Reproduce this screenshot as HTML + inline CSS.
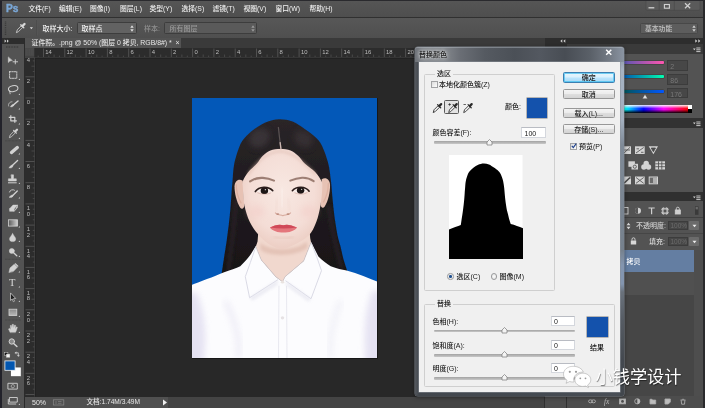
<!DOCTYPE html>
<html lang="zh-CN">
<head>
<meta charset="utf-8">
<title>替换颜色</title>
<style>
html,body{margin:0;padding:0;}
body{width:705px;height:408px;overflow:hidden;background:#282828;position:relative;
 font-family:"Liberation Sans","Noto Sans CJK SC",sans-serif;font-size:7px;color:#e4e4e4;line-height:1;font-weight:500;}
.a{position:absolute;}
.t{position:absolute;white-space:nowrap;}
#menubar{left:0;top:0;width:705px;height:17px;background:linear-gradient(#565656,#4e4e4e);}
#menubar .t{top:6.2px;font-size:6.8px;color:#f2f2f2;}
#optbar{left:0;top:18px;width:705px;height:19.5px;background:linear-gradient(#575757,#4f4f4f);}
#sep1{left:0;top:17px;width:705px;height:1px;background:#303030;}
.dd{position:absolute;background:#626262;border:0.5px solid #3d3d3d;border-radius:1.5px;box-sizing:border-box;}
#tabbar{left:25px;top:37.5px;width:519.5px;height:10.5px;background:#3a3a3a;}
#tab{left:25px;top:38px;width:156px;height:10px;background:#535353;}
#tools{left:2px;top:37.5px;width:21.5px;height:371px;background:#535353;}
#toolhead{left:2px;top:37.5px;width:21.5px;height:6px;background:#2d2d2d;}
#leftedge{left:0;top:37.5px;width:2px;height:371px;background:#2b2b2b;}
#gap{left:23.5px;top:37.5px;width:1.5px;height:371px;background:#2b2b2b;}
#status{left:25px;top:396.5px;width:143px;height:11.5px;background:#505050;}
#hscroll{left:168px;top:396.5px;width:376px;height:11.5px;background:#444444;}
</style>
</head>
<body>
<div id="root" style="position:absolute;left:0;top:0;width:705px;height:408px;overflow:hidden;will-change:transform;">
<!-- ===== menu bar ===== -->
<div class="a" id="menubar">
 <div class="t" style="left:6.2px;top:3px;font-size:11.3px;font-weight:bold;color:#7aa7d6;-webkit-text-stroke:0.4px #7aa7d6;transform:scaleX(0.9);transform-origin:0 0;">Ps</div>
 <div class="t" style="left:28.5px;">文件(F)</div>
 <div class="t" style="left:59px;">编辑(E)</div>
 <div class="t" style="left:90px;">图像(I)</div>
 <div class="t" style="left:120px;">图层(L)</div>
 <div class="t" style="left:149.5px;">类型(Y)</div>
 <div class="t" style="left:181.5px;">选择(S)</div>
 <div class="t" style="left:212.5px;">滤镜(T)</div>
 <div class="t" style="left:243.5px;">视图(V)</div>
 <div class="t" style="left:275.5px;">窗口(W)</div>
 <div class="t" style="left:309.5px;">帮助(H)</div>
</div>
<div class="a" id="sep1"></div>
<!-- ===== options bar ===== -->
<div class="a" id="optbar">
 <div class="t" style="left:42.5px;top:6.5px;color:#f2f2f2;">取样大小:</div>
 <div class="dd" style="left:76.5px;top:4px;width:60px;height:11.5px;"><div class="t" style="left:4px;top:2px;color:#f4f4f4;">取样点</div></div>
 <div class="t" style="left:144px;top:6.5px;color:#8f8f8f;">样本:</div>
 <div class="dd" style="left:164px;top:4px;width:93px;height:11.5px;background:#5a5a5a;"><div class="t" style="left:4.5px;top:2px;color:#9a9a9a;">所有图层</div></div>
 <div class="dd" style="left:640px;top:4.700px;width:58px;height:11.300px;background:#5d5d5d;border-color:#484848;"><div class="t" style="left:4px;top:2px;color:#c4c4c4;font-size:6.800px;">基本功能</div></div>
</div>
<!-- ===== document area ===== -->
<div class="a" id="tabbar"></div>
<div class="a" id="tab"><div class="t" style="left:6.5px;top:1.5px;color:#e6e6e6;font-size:6.9px;">证件照。.png @ 50% (图层 0 拷贝, RGB/8#) *&nbsp;&nbsp;×</div></div>
<!--RULERS-->
<svg class="a" style="left:25px;top:48px;" width="520" height="11" viewBox="25 48 520 11">
<rect x="25" y="48" width="520" height="9.500" fill="#2c2c2c"/>
<rect x="25" y="57" width="520" height="0.600" fill="#585858"/>
<rect x="34.800" y="57.600" width="510.200" height="1.400" fill="#222222"/>
<path d="M43.5,48.5V57M64.8,48.5V57M86.1,48.5V57M107.4,48.5V57M128.7,48.5V57M150.0,48.5V57M171.3,48.5V57M192.6,48.5V57M213.9,48.5V57M235.2,48.5V57M256.5,48.5V57M277.8,48.5V57M299.1,48.5V57M320.4,48.5V57M341.7,48.5V57M363.0,48.5V57M384.3,48.5V57M405.6,48.5V57M426.9,48.5V57M448.2,48.5V57M469.5,48.5V57M490.8,48.5V57M512.1,48.5V57M533.4,48.5V57" stroke="#606060" stroke-width="0.700" fill="none"/>
<path d="M54.1,54.5V57M75.4,54.5V57M96.8,54.5V57M118.0,54.5V57M139.3,54.5V57M160.7,54.5V57M181.9,54.5V57M203.2,54.5V57M224.6,54.5V57M245.8,54.5V57M267.1,54.5V57M288.4,54.5V57M309.8,54.5V57M331.0,54.5V57M352.3,54.5V57M373.6,54.5V57M394.9,54.5V57M416.2,54.5V57M437.5,54.5V57M458.9,54.5V57M480.1,54.5V57M501.4,54.5V57M522.8,54.5V57M544.0,54.5V57M38.2,55.600V57M48.8,55.600V57M59.5,55.600V57M70.1,55.600V57M80.8,55.600V57M91.4,55.600V57M102.1,55.600V57M112.7,55.600V57M123.4,55.600V57M134.0,55.600V57M144.7,55.600V57M155.3,55.600V57M166.0,55.600V57M176.6,55.600V57M187.3,55.600V57M197.9,55.600V57M208.6,55.600V57M219.2,55.600V57M229.9,55.600V57M240.5,55.600V57M251.2,55.600V57M261.8,55.600V57M272.5,55.600V57M283.1,55.600V57M293.8,55.600V57M304.4,55.600V57M315.1,55.600V57M325.7,55.600V57M336.4,55.600V57M347.0,55.600V57M357.7,55.600V57M368.3,55.600V57M379.0,55.600V57M389.6,55.600V57M400.3,55.600V57M410.9,55.600V57M421.6,55.600V57M432.2,55.600V57M442.9,55.600V57M453.5,55.600V57M464.2,55.600V57M474.8,55.600V57M485.5,55.600V57M496.1,55.600V57M506.8,55.600V57M517.4,55.600V57M528.1,55.600V57M538.7,55.600V57" stroke="#5c5c5c" stroke-width="0.600" fill="none"/>
<g font-family="Liberation Sans, sans-serif" font-size="5.900" fill="#bebebe"><text x="45.3" y="54.400">14</text><text x="66.6" y="54.400">12</text><text x="87.9" y="54.400">10</text><text x="109.2" y="54.400">8</text><text x="130.5" y="54.400">6</text><text x="151.8" y="54.400">4</text><text x="173.1" y="54.400">2</text><text x="194.4" y="54.400">0</text><text x="215.7" y="54.400">2</text><text x="237.0" y="54.400">4</text><text x="258.3" y="54.400">6</text><text x="279.6" y="54.400">8</text><text x="300.9" y="54.400">10</text><text x="322.2" y="54.400">12</text><text x="343.5" y="54.400">14</text><text x="364.8" y="54.400">16</text><text x="386.1" y="54.400">18</text><text x="407.4" y="54.400">20</text><text x="428.7" y="54.400">22</text><text x="450.0" y="54.400">24</text><text x="471.3" y="54.400">26</text><text x="492.6" y="54.400">28</text><text x="513.9" y="54.400">30</text><text x="535.2" y="54.400">32</text></g>
<rect x="25" y="48" width="9.300" height="8.800" fill="#494949"/>
<path d="M26,50H34M26,52H34M26,54H34" stroke="#5a5a5a" stroke-width="0.600" stroke-dasharray="0.800 0.800"/>
</svg>
<svg class="a" style="left:25px;top:57.500px;" width="11" height="339" viewBox="25 58 11 339">
<rect x="25" y="57.500" width="9.800" height="339" fill="#2c2c2c"/>
<rect x="34.200" y="57.500" width="0.600" height="339" fill="#585858"/>
<rect x="34.800" y="58.500" width="1.200" height="338" fill="#222222"/>
<path d="M25.500,76.8H34.500M25.500,98.0H34.500M25.500,119.2H34.500M25.500,140.4H34.500M25.500,161.5H34.500M25.500,182.7H34.500M25.500,203.9H34.500M25.500,225.1H34.500M25.500,246.3H34.500M25.500,267.4H34.500M25.500,288.6H34.500M25.500,309.8H34.500M25.500,331.0H34.500M25.500,352.2H34.500M25.500,373.3H34.500M25.500,394.5H34.500" stroke="#606060" stroke-width="0.700" fill="none"/>
<path d="M31.500,66.2H34.500M31.500,87.4H34.500M31.500,108.6H34.500M31.500,129.8H34.500M31.500,151.0H34.500M31.500,172.1H34.500M31.500,193.3H34.500M31.500,214.5H34.500M31.500,235.7H34.500M31.500,256.8H34.500M31.500,278.0H34.500M31.500,299.2H34.500M31.500,320.4H34.500M31.500,341.6H34.500M31.500,362.7H34.500M31.500,383.9H34.500M32.800,60.9H34.500M32.800,71.5H34.500M32.800,82.1H34.500M32.800,92.7H34.500M32.800,103.3H34.500M32.800,113.9H34.500M32.800,124.5H34.500M32.800,135.1H34.500M32.800,145.7H34.500M32.800,156.2H34.500M32.800,166.8H34.500M32.800,177.4H34.500M32.800,188.0H34.500M32.800,198.6H34.500M32.800,209.2H34.500M32.800,219.8H34.500M32.800,230.4H34.500M32.800,241.0H34.500M32.800,251.6H34.500M32.800,262.1H34.500M32.800,272.7H34.500M32.800,283.3H34.500M32.800,293.9H34.500M32.800,304.5H34.500M32.800,315.1H34.500M32.800,325.7H34.500M32.800,336.3H34.500M32.800,346.9H34.500M32.800,357.5H34.500M32.800,368.0H34.500M32.800,378.6H34.500M32.800,389.2H34.500" stroke="#5c5c5c" stroke-width="0.600" fill="none"/>
<g font-family="Liberation Sans, sans-serif" font-size="5.900" fill="#bebebe"><text x="28.300" y="61.8" text-anchor="middle">4</text><text x="28.300" y="83.0" text-anchor="middle">2</text><text x="28.300" y="104.2" text-anchor="middle">0</text><text x="28.300" y="125.4" text-anchor="middle">2</text><text x="28.300" y="146.6" text-anchor="middle">4</text><text x="28.300" y="167.7" text-anchor="middle">6</text><text x="28.300" y="188.9" text-anchor="middle">8</text><text x="28.300" y="210.1" text-anchor="middle">1</text><text x="28.300" y="215.6" text-anchor="middle">0</text><text x="28.300" y="231.3" text-anchor="middle">1</text><text x="28.300" y="236.8" text-anchor="middle">2</text><text x="28.300" y="252.5" text-anchor="middle">1</text><text x="28.300" y="258.0" text-anchor="middle">4</text><text x="28.300" y="273.6" text-anchor="middle">1</text><text x="28.300" y="279.1" text-anchor="middle">6</text><text x="28.300" y="294.8" text-anchor="middle">1</text><text x="28.300" y="300.3" text-anchor="middle">8</text><text x="28.300" y="316.0" text-anchor="middle">2</text><text x="28.300" y="321.5" text-anchor="middle">0</text><text x="28.300" y="337.2" text-anchor="middle">2</text><text x="28.300" y="342.7" text-anchor="middle">2</text><text x="28.300" y="358.4" text-anchor="middle">2</text><text x="28.300" y="363.9" text-anchor="middle">4</text><text x="28.300" y="379.5" text-anchor="middle">2</text><text x="28.300" y="385.0" text-anchor="middle">6</text></g>
</svg>
<!--/RULERS-->
<div class="a" id="leftedge"></div>
<div class="a" id="tools"></div>
<div class="a" id="toolhead"></div>
<div class="a" id="gap"></div>
<div class="a" id="status">
 <div class="t" style="left:7px;top:2.5px;color:#e8e8e8;">50%</div>
 <div class="t" style="left:61.5px;top:2.7px;color:#e8e8e8;font-size:6.6px;">文档:1.74M/3.49M</div>
</div>
<div class="a" id="hscroll"></div>
<!--MISC-->
<!-- window controls -->
<svg class="a" style="left:640px;top:0;" width="65" height="14" viewBox="640 0 65 14">
 <path d="M646,0 V9 a1.300,1.300 0 0 0 1.300,1.300 H698.700 a1.300,1.300 0 0 0 1.300,-1.300 V0 Z" fill="#5a5a5a" stroke="#464646" stroke-width="0.600"/>
 <path d="M659.200,0.800 V10.300 M674.300,0.800 V10.300" fill="none" stroke="#484848" stroke-width="0.700"/>
 <path d="M648.500,7.800 H654.300" stroke="#d2d2d2" stroke-width="1.300"/>
 <rect x="664.400" y="4.500" width="5" height="3.700" fill="none" stroke="#d2d2d2" stroke-width="1.100"/>
 <path d="M685,3.300 L690.200,8.200 M690.200,3.300 L685,8.200" stroke="#d2d2d2" stroke-width="1.200"/>
</svg>
<!-- options bar icon etc -->
<svg class="a" style="left:0;top:18px;" width="140" height="19.500" viewBox="0 18 140 19.500">
 <path d="M5.500,21.500 V35" stroke="#3a3a3a" stroke-width="1.400" stroke-dasharray="0.900 0.900"/>
 <g fill="none" stroke="#d8d8d8" stroke-linecap="round" stroke-linejoin="round">
  <path d="M16.500,32.300 L17.300,29.800 L21.300,25.800 L22.800,27.300 L18.800,31.300 Z" stroke-width="0.800"/>
  <path d="M20.800,24.800 L23.800,27.800" stroke-width="1.300"/>
  <path d="M22.500,26 L24.500,24" stroke-width="2.400"/>
 </g>
 <path d="M29.800,27.200 H33 L31.400,29.200 Z" fill="#d8d8d8"/>
 <path d="M36.800,20 V35.500" stroke="#444" stroke-width="0.700"/>
 <path d="M37.400,20 V35.500" stroke="#5e5e5e" stroke-width="0.500"/>
</svg>
<svg class="a" style="left:130px;top:24.500px;" width="4" height="7" viewBox="0 0 4 7"><path d="M2,0.300 L3.700,2.700 H0.300 Z M2,6.700 L3.700,4.300 H0.300 Z" fill="#e0e0e0"/></svg>
<svg class="a" style="left:250.500px;top:24.500px;" width="4" height="7" viewBox="0 0 4 7"><path d="M2,0.300 L3.700,2.700 H0.300 Z M2,6.700 L3.700,4.300 H0.300 Z" fill="#9a9a9a"/></svg>
<svg class="a" style="left:692px;top:24.500px;" width="4" height="7" viewBox="0 0 4 7"><path d="M2,0.300 L3.700,2.700 H0.300 Z M2,6.700 L3.700,4.300 H0.300 Z" fill="#d0d0d0"/></svg>
<!-- status bar icons -->
<svg class="a" style="left:52px;top:398px;" width="14" height="9" viewBox="52 398 14 9"><rect x="53.300" y="399.800" width="10.500" height="5.200" fill="none" stroke="#8a8a8a" stroke-width="0.700"/><path d="M56,401 v3 M58,401.500 h3.500 M58,403.300 h3.500" stroke="#8a8a8a" stroke-width="0.600"/></svg>
<svg class="a" style="left:162px;top:399px;" width="6" height="7" viewBox="0 0 6 7"><path d="M1,0.600 L5,3.500 L1,6.400 Z" fill="#f0f0f0"/></svg>
<!--/MISC-->
<!--TOOLS-->
<svg class="a" style="left:0;top:37.5px;" width="25" height="370.5" viewBox="0 37.5 25 370.5">
 <!-- header arrows + grip -->
 <path d="M4.600,39 L6.400,40.600 L4.600,42.200 Z M7,39 L8.800,40.600 L7,42.200 Z" fill="#d0d0d0"/>
 <path d="M6,46.500 H19" stroke="#3a3a3a" stroke-width="1.600" stroke-dasharray="0.800 0.800"/>
 <g fill="none" stroke="#d2d2d2" stroke-width="1" stroke-linecap="round" stroke-linejoin="round">
  <!-- move -->
  <path d="M8.300,56.800 L8.300,62 L9.800,60.600 L12,60 Z" fill="#d2d2d2" stroke-width="0.500"/>
  <path d="M13,61.300 H17.600 M15.300,59.200 V63.400" stroke-width="0.900"/>
  <!-- marquee -->
  <rect x="9.600" y="71.200" width="7.200" height="6.600" stroke-dasharray="1.400 1" stroke-width="0.900"/>
  <!-- lasso -->
  <ellipse cx="13.200" cy="88.200" rx="4.800" ry="2.900" transform="rotate(-12 13.200 88.200)" stroke-width="1"/>
  <path d="M9.500,90.200 C9,91.500 10.500,92 10.200,93.300" stroke-width="0.900"/>
  <!-- quick select -->
  <path d="M18,100.500 L13,104.800" stroke-width="1.500"/>
  <path d="M13.200,104 C11.500,104.200 10.800,105.500 10.300,106.300 C11.800,106.800 13.500,106 13.900,104.800 Z" fill="#d2d2d2" stroke-width="0.400"/>
  <path d="M8.600,105.500 A3.400,3.400 0 0 1 12,101.300" stroke-dasharray="1 0.800" stroke-width="0.700"/>
  <!-- crop -->
  <path d="M10.800,114.800 V120.300 H16.800 M8.800,116.800 H14.800 V122.300" stroke-width="1.200" stroke-linecap="butt"/>
  <!-- eyedropper -->
  <path d="M9.500,136.800 L10.200,134.500 L14,130.700 L15.500,132.200 L11.700,136 Z" stroke-width="0.800"/>
  <path d="M13.600,129.800 L16.400,132.600" stroke-width="1.200"/>
  <path d="M15.200,131 L17,129.200" stroke-width="2.200"/>
  <!-- healing -->
  <path d="M11.500,152 L17.300,147" stroke-width="3.400"/>
  <!-- brush -->
  <path d="M17.600,160 L12.300,165" stroke-width="1.300"/>
  <path d="M12.300,164.500 C10.500,164.500 10,166.500 8.800,167.300 C10.800,168 12.800,167.300 13,165.300 Z" fill="#d2d2d2" stroke-width="0.400"/>
  <!-- stamp -->
  <path d="M11.300,174.300 H13.500 V178.300 H16.300 V180.500 H8.400 V178.300 H11.300 Z" fill="#d2d2d2" stroke-width="0.500"/>
  <path d="M8.400,182.300 H16.300" stroke-width="1"/>
  <!-- history brush -->
  <path d="M17.300,190.500 L12.500,195.200" stroke-width="1.300"/>
  <path d="M12.400,194.500 C10.800,194.500 10.300,196 9,196.700 C11,197.300 12.900,196.800 13.200,195.200 Z" fill="#d2d2d2" stroke-width="0.400"/>
  <path d="M9.500,191.500 A3.200,3.200 0 0 1 14.500,189.700" stroke-width="0.900"/>
  <!-- eraser -->
  <path d="M9.600,208.300 L13,204.600 H17.500 L14.200,208.300 Z M9.600,208.300 V210.800 H14.200 V208.300 M14.200,210.800 L17.500,207 V204.600" fill="#d2d2d2" stroke-width="0.500"/>
  <!-- blur drop -->
  <path d="M12.600,233 C14,235.500 15.700,237 15.700,238.500 A3.100,2.600 0 0 1 9.500,238.500 C9.500,237 11.200,235.500 12.600,233 Z" fill="#d2d2d2" stroke-width="0.400"/>
  <!-- dodge -->
  <circle cx="11.800" cy="250.400" r="2.500" fill="#d2d2d2" stroke-width="0.500"/>
  <path d="M13.600,252.300 L16.800,255.300" stroke-width="1.300"/>
  <!-- pen -->
  <path d="M9,271.800 L10,267.500 L14.200,263.800 L17.300,266.800 L13.500,270.800 Z" fill="#d2d2d2" stroke-width="0.500"/>
  <path d="M15.300,263.300 L17.800,265.700" stroke-width="1.200"/>
  <!-- path selection -->
  <path d="M10.500,292.800 L10.500,300 L12.200,298.500 L13.300,301.200 L14.500,300.700 L13.400,298.200 L15.300,298 Z" fill="#1e1e1e" stroke-width="0.700"/>
  <!-- hand -->
  <path d="M10,331.800 L8.500,328.500 L9.300,327.800 L10.600,329 L10.300,325 L11.300,324.700 L12,327.500 L12.300,323.800 L13.400,323.800 L13.700,327.500 L14.600,324.500 L15.600,324.800 L15.300,328.200 L16.600,326.300 L17.400,326.800 L16.300,330.300 L15.500,331.800 Z" fill="#d2d2d2" stroke-width="0.400"/>
  <!-- zoom -->
  <circle cx="11.800" cy="341" r="2.700" stroke-width="1" fill="#8a8a8a"/>
  <path d="M13.900,343.200 L16.900,346" stroke-width="1.500"/>
  <!-- swap arrows -->
  <path d="M15.500,352.300 H18.300 V355.300" stroke-width="0.800"/>
  <path d="M15,352.300 l1.300,-1 v2 Z M18.300,356 l-1,-1.300 h2 Z" fill="#d2d2d2" stroke-width="0.300"/>
  <!-- quick mask -->
  <rect x="8.300" y="382.800" width="9" height="5.800" stroke-width="0.900"/>
  <circle cx="12.800" cy="385.700" r="1.600" stroke-dasharray="0.700 0.500" stroke-width="0.600"/>
  <!-- screen mode -->
  <rect x="9.800" y="397" width="7.500" height="4.600" stroke-width="0.900"/>
  <path d="M8.300,399 V403.500 H15.800" stroke-width="0.900"/>
 </g>
 <!-- T -->
 <text x="8.900" y="285.800" font-family="Liberation Serif, serif" font-size="10.500" fill="#d8d8d8">T</text>
 <!-- gradient tool -->
 <defs><linearGradient id="gt" x1="0" x2="1"><stop offset="0" stop-color="#5a5a5a"/><stop offset="1" stop-color="#cfcfcf"/></linearGradient>
 <linearGradient id="rt" x1="0" x2="0" y1="0" y2="1"><stop offset="0" stop-color="#8a8a8a"/><stop offset="1" stop-color="#b8b8b8"/></linearGradient></defs>
 <rect x="8.500" y="219.300" width="9" height="6.300" fill="url(#gt)" stroke="#d2d2d2" stroke-width="0.800"/>
 <rect x="9" y="308.700" width="7.800" height="6.300" fill="url(#rt)" stroke="#d2d2d2" stroke-width="0.800"/>
 <!-- default colours mini -->
 <rect x="4.300" y="351.800" width="3.600" height="3.300" fill="#1a1a1a" stroke="#d2d2d2" stroke-width="0.500"/>
 <rect x="6.300" y="353.600" width="3.600" height="3.300" fill="#f4f4f4" stroke="#bbb" stroke-width="0.300"/>
 <!-- fg / bg swatches -->
 <rect x="10.700" y="366.600" width="10.400" height="9.400" fill="#ffffff" stroke="#3a3a3a" stroke-width="0.500"/>
 <rect x="4.900" y="360.400" width="10.200" height="9.400" fill="#0256b0" stroke="#f4f4f4" stroke-width="0.800"/>
 <!-- corner marks -->
 <g fill="#c8c8c8">
  <path d="M20,78 v1.600 h-1.600 Z M20,93 v1.600 h-1.600 Z M20,107.500 v1.600 h-1.600 Z M20,122.500 v1.600 h-1.600 Z M20,137 v1.600 h-1.600 Z M20,152.500 v1.600 h-1.600 Z M20,167 v1.600 h-1.600 Z M20,182 v1.600 h-1.600 Z M20,196.500 v1.600 h-1.600 Z M20,211 v1.600 h-1.600 Z M20,225.500 v1.600 h-1.600 Z M20,240 v1.600 h-1.600 Z M20,255 v1.600 h-1.600 Z M20,270.500 v1.600 h-1.600 Z M20,285.500 v1.600 h-1.600 Z M20,300 v1.600 h-1.600 Z M20,315 v1.600 h-1.600 Z M20,331 v1.600 h-1.600 Z M20,403 v1.600 h-1.600 Z"/>
 </g>
 <!-- separators -->
 <path d="M5,140.300 H21 M5,258.800 H21 M5,319.500 H21" stroke="#3c3c3c" stroke-width="0.700" stroke-dasharray="0.700 0.700"/>
</svg>
<!--/TOOLS-->
<!--PHOTO-->
<svg class="a" style="left:192px;top:97.700px;box-shadow:0.500px 0.500px 0 0.400px #161616;" width="185" height="260" viewBox="192 98 184 259" preserveAspectRatio="none">
 <defs>
  <filter id="b1" x="-5%" y="-5%" width="110%" height="110%"><feGaussianBlur stdDeviation="0.6"/></filter>
  <filter id="b2" x="-20%" y="-20%" width="140%" height="140%"><feGaussianBlur stdDeviation="1.6"/></filter>
  <filter id="b3" x="-30%" y="-30%" width="160%" height="160%"><feGaussianBlur stdDeviation="3"/></filter>
  <filter id="b4" x="-30%" y="-30%" width="160%" height="160%"><feGaussianBlur stdDeviation="5"/></filter>
  <radialGradient id="skin" cx="0.5" cy="0.42" r="0.62">
   <stop offset="0" stop-color="#f8e8e2"/><stop offset="0.65" stop-color="#f4ddd6"/><stop offset="1" stop-color="#eacabf"/>
  </radialGradient>
  <linearGradient id="hairg" x1="0" y1="0" x2="0" y2="1">
   <stop offset="0" stop-color="#2a2528"/><stop offset="0.45" stop-color="#1f1b1e"/><stop offset="1" stop-color="#171416"/>
  </linearGradient>
  <clipPath id="pc"><rect x="192" y="98" width="184" height="259"/></clipPath>
  <clipPath id="hc"><path d="M221.5,273.0 C221.9,270.5 222.9,263.5 223.7,258.0 C224.5,252.5 225.7,246.0 226.5,240.0 C227.3,234.0 228.2,227.5 228.8,222.0 C229.4,216.5 229.9,211.8 230.3,207.0 C230.7,202.2 231.0,197.4 231.3,193.0 C231.6,188.6 231.9,185.6 232.3,180.7 C232.8,175.8 232.8,169.2 234.0,163.5 C235.2,157.8 237.5,150.6 239.2,146.3 C240.9,142.0 241.9,140.7 244.3,137.8 C246.7,135.0 250.4,131.8 253.8,129.2 C257.2,126.6 260.9,124.0 265.0,122.3 C269.1,120.6 274.2,119.3 278.7,119.2 C283.2,119.1 287.7,119.8 292.0,121.5 C296.3,123.2 300.5,126.5 304.4,129.2 C308.3,131.9 312.7,135.0 315.6,137.8 C318.5,140.7 319.6,142.0 321.6,146.3 C323.6,150.6 326.2,157.8 327.6,163.5 C329.0,169.2 329.5,175.3 330.2,180.7 C330.9,186.1 331.1,191.1 331.6,196.0 C332.1,200.9 332.5,205.8 333.0,210.0 C333.5,214.2 333.8,217.2 334.5,221.5 C335.2,225.8 336.1,231.9 337.0,236.0 C337.9,240.1 338.8,242.3 339.7,246.0 C340.6,249.7 341.4,253.9 342.5,258.0 C343.6,262.1 345.8,268.4 346.5,270.5 L330,290 L240,290 Z"/></clipPath>
 </defs>
 <rect x="192" y="98" width="184" height="259" fill="#0358b8"/>
 <g clip-path="url(#pc)">
 <g filter="url(#b1)">
  <!-- hair -->
  <path fill="url(#hairg)" d="M221.5,273.0 C221.9,270.5 222.9,263.5 223.7,258.0 C224.5,252.5 225.7,246.0 226.5,240.0 C227.3,234.0 228.2,227.5 228.8,222.0 C229.4,216.5 229.9,211.8 230.3,207.0 C230.7,202.2 231.0,197.4 231.3,193.0 C231.6,188.6 231.9,185.6 232.3,180.7 C232.8,175.8 232.8,169.2 234.0,163.5 C235.2,157.8 237.5,150.6 239.2,146.3 C240.9,142.0 241.9,140.7 244.3,137.8 C246.7,135.0 250.4,131.8 253.8,129.2 C257.2,126.6 260.9,124.0 265.0,122.3 C269.1,120.6 274.2,119.3 278.7,119.2 C283.2,119.1 287.7,119.8 292.0,121.5 C296.3,123.2 300.5,126.5 304.4,129.2 C308.3,131.9 312.7,135.0 315.6,137.8 C318.5,140.7 319.6,142.0 321.6,146.3 C323.6,150.6 326.2,157.8 327.6,163.5 C329.0,169.2 329.5,175.3 330.2,180.7 C330.9,186.1 331.1,191.1 331.6,196.0 C332.1,200.9 332.5,205.8 333.0,210.0 C333.5,214.2 333.8,217.2 334.5,221.5 C335.2,225.8 336.1,231.9 337.0,236.0 C337.9,240.1 338.8,242.3 339.7,246.0 C340.6,249.7 341.4,253.9 342.5,258.0 C343.6,262.1 345.8,268.4 346.5,270.5 L330,290 L240,290 Z"/>
  <g clip-path="url(#hc)">
   <ellipse cx="259" cy="138" rx="11" ry="9" fill="#4a4346" opacity="0.55" filter="url(#b3)" transform="rotate(-35 259 138)"/>
   <ellipse cx="303" cy="139" rx="10" ry="8" fill="#453e41" opacity="0.5" filter="url(#b3)" transform="rotate(35 303 139)"/>
   <path d="M236,200 C234,225 231,250 228,270" stroke="#2e282a" stroke-width="4" fill="none" opacity="0.6" filter="url(#b2)"/>
   <path d="M328,205 C331,230 336,250 341,268" stroke="#2e282a" stroke-width="4" fill="none" opacity="0.6" filter="url(#b2)"/>
  </g>
  <!-- neck -->
  <path fill="#f1d8ce" d="M258.500,225 L257.200,241 L255.500,246 L261,259.500 L275.300,276 L282,281 L284.500,276 L303,260.400 L310.400,241.700 L309.600,238 L308.500,225 Z"/>
  <path fill="#dbb5a7" opacity="0.6" filter="url(#b2)" d="M260,242 C268,251 296,251 306,241 L307,247 C297,256 268,257 260,249 Z"/>
  <!-- ears -->
  <path d="M242.500,180.500 C238.500,178 234.500,180.500 234.300,186 C234.200,193 236.500,202 239.800,207 C241.700,209.500 243.800,208 244,205 Z" fill="#e7c2b4"/>
  <path d="M321,179 C325,176.500 329,179 329.300,184.500 C329.500,192 327.300,201 324,206 C322.200,208.500 320,207 319.800,204 Z" fill="#e7c2b4"/>
  <path d="M236,184 C236,191 238,198 241,203" stroke="#d9a999" stroke-width="1.200" fill="none" opacity="0.7"/>
  <path d="M327.600,183 C327.600,190 325.600,197 322.600,202" stroke="#d9a999" stroke-width="1.200" fill="none" opacity="0.7"/>
  <!-- face -->
  <path fill="url(#skin)" d="M280.0,148.8 C276.7,148.8 272.9,149.2 270.0,150.3 C267.1,151.4 264.8,153.3 262.5,155.5 C260.2,157.7 258.8,160.8 256.3,163.5 C253.9,166.2 250.1,169.1 247.8,172.0 C245.5,174.9 243.5,178.2 242.6,180.7 C241.7,183.2 242.4,183.1 242.6,187.0 C242.8,190.9 242.8,198.6 244.0,204.3 C245.2,210.1 247.0,216.3 249.5,221.5 C252.0,226.7 255.6,231.4 259.0,235.2 C262.4,239.0 266.2,242.3 270.0,244.5 C273.8,246.7 277.7,248.5 281.5,248.5 C285.3,248.5 288.6,246.7 293.0,244.5 C297.4,242.3 304.0,239.0 307.8,235.2 C311.6,231.4 313.6,226.7 315.6,221.5 C317.6,216.3 318.9,210.1 319.9,204.3 C320.9,198.6 321.5,190.9 321.6,187.0 C321.7,183.1 321.9,183.2 320.7,180.7 C319.5,178.2 317.4,174.9 314.7,172.0 C312.0,169.1 307.3,166.2 304.4,163.5 C301.5,160.8 299.9,157.7 297.5,155.5 C295.1,153.3 292.9,151.4 290.0,150.3 C287.1,149.2 283.3,148.8 280.0,148.8 Z"/>
  <!-- hair parting -->
  <path d="M277.900,127 C278.500,133 279.300,140 280.400,148.500" stroke="#7d7371" stroke-width="1.200" fill="none" opacity="0.6"/>
  <path d="M279.600,142 L280.600,150" stroke="#e6d0c9" stroke-width="1.300" fill="none" opacity="0.8"/>
  <!-- forehead shadow under hairline -->
  <path d="M247.800,174 C252,168 256,163 262,158 C268,153.500 274,151.500 279.500,151 C286,151.500 292,154 298,158.500 C304,163 310,169 315,174" stroke="#d9b5a8" stroke-width="2" fill="none" opacity="0.55" filter="url(#b2)"/>
  <!-- cheeks blush -->
  <ellipse cx="256" cy="211" rx="8" ry="6" fill="#f3cdc8" opacity="0.55" filter="url(#b3)"/>
  <ellipse cx="308" cy="211" rx="8" ry="6" fill="#f3cdc8" opacity="0.55" filter="url(#b3)"/>
  <!-- eyebrows -->
  <path d="M249.800,181 C254,178.300 259,177.300 262.500,177.600 C266.500,177.900 270.500,179 273.500,180.300" stroke="#8d6d61" stroke-width="2.100" fill="none" stroke-linecap="round" opacity="0.85"/>
  <path d="M289.800,180.300 C293,179 297.500,177.800 301.500,177.500 C305.500,177.300 309.500,178.400 313,180.800" stroke="#8d6d61" stroke-width="2.100" fill="none" stroke-linecap="round" opacity="0.85"/>
  <!-- eyes -->
  <path d="M256,191 C259,187 268,186.600 271.500,191.300 C267,193.800 260,193.800 256,191 Z" fill="#f6ebe8"/>
  <path d="M292.600,191 C296,186.400 304.500,186.700 307.600,190.500 C303.500,193.500 297,193.600 292.600,191 Z" fill="#f6ebe8"/>
  <ellipse cx="264" cy="190.300" rx="3.700" ry="3.400" fill="#1d1514"/>
  <ellipse cx="300" cy="190" rx="3.700" ry="3.400" fill="#1d1514"/>
  <path d="M255,191.200 C258.500,186 268,185.600 272.300,190.300" stroke="#2b1d1a" stroke-width="1.600" fill="none" stroke-linecap="round"/>
  <path d="M291.800,190.300 C296,185.500 304.800,185.800 308.500,190.800" stroke="#2b1d1a" stroke-width="1.600" fill="none" stroke-linecap="round"/>
  <path d="M257,192.300 C261,194.300 267,194.300 270.500,192.500" stroke="#c79c90" stroke-width="0.700" fill="none" opacity="0.7"/>
  <path d="M294,192.300 C298,194.300 303.500,194.300 306.800,192" stroke="#c79c90" stroke-width="0.700" fill="none" opacity="0.7"/>
  <circle cx="265" cy="189.300" r="0.700" fill="#fff" opacity="0.8"/><circle cx="301" cy="189" r="0.700" fill="#fff" opacity="0.8"/>
  <!-- nose -->
  <path d="M281.500,188 L281.800,207" stroke="#fdf6f3" stroke-width="2.500" fill="none" opacity="0.45" filter="url(#b2)"/>
  <path d="M277,198 C276.500,204 275.500,208 275,211.500" stroke="#e6c6bb" stroke-width="1.400" fill="none" opacity="0.35" filter="url(#b2)"/><path d="M287.500,198 C288,204 289,208 289.500,211.500" stroke="#e6c6bb" stroke-width="1.400" fill="none" opacity="0.3" filter="url(#b2)"/>
  <path d="M275,212.500 C276.500,214.800 280,214.300 282.300,215.200 C284.500,214.300 288.500,214.800 290,212.500" stroke="#cf9e8f" stroke-width="1.100" fill="none" stroke-linecap="round" opacity="0.8"/><ellipse cx="277.300" cy="213.600" rx="1.500" ry="0.800" fill="#a8705f" opacity="0.75"/><ellipse cx="287.500" cy="213.600" rx="1.500" ry="0.800" fill="#a8705f" opacity="0.75"/>
  <!-- lips -->
  <path d="M269.500,227 C274,224.800 279,223.300 282.800,224.800 C286.500,223.300 291,224.800 296.500,227 C292,233.800 274,233.800 269.500,227 Z" fill="#e4767c"/>
  <path d="M269.500,227 C274,224.800 279,223.300 282.800,224.800 C286.500,223.300 291,224.800 296.500,227 C288,228.300 278,228.300 269.500,227 Z" fill="#d04a58"/>
  <path d="M273,236 C278,238.500 288,238.500 293,236" stroke="#e0bdb0" stroke-width="1.500" fill="none" opacity="0.6" filter="url(#b2)"/>
  <!-- shirt -->
  <path fill="#fcfcfe" d="M190,285 C200,281 214,276 223.300,271.900 C230,269.500 236,267.500 240,265.600 C245,261 248,257 250.300,254 L255.500,245.500 L261,259.500 L275.300,276 L282,281 L284.500,276 L303,260.400 L310.400,241.500 L317.700,256 C322,260 326,263.500 330,265.600 C336,268 341,269 345.800,269.800 C357,273 368,277.500 378,281.500 L378,360 L190,360 Z"/>
  <!-- collar shadows -->
  <path d="M255.500,246 L250,262 L245,276 L249.300,297 L277.500,279" stroke="#d6d6e2" stroke-width="0.900" fill="none" stroke-linejoin="round"/>
  <path d="M310.400,242 L316,256 L320.800,270 L310.400,298 L285,280" stroke="#d6d6e2" stroke-width="0.900" fill="none" stroke-linejoin="round"/>
  <path d="M249.300,297 L277.500,279 L277,284 L252,300 Z" fill="#e4e4ee" opacity="0.7" filter="url(#b2)"/>
  <path d="M310.400,298 L285,280 L286,285 L308,301 Z" fill="#e4e4ee" opacity="0.7" filter="url(#b2)"/>
  <path d="M255.800,247 L261,259.500 L275.300,276 L282,281 L284.500,276 L303,260.400 L310,243" stroke="#d8cccd" stroke-width="0.800" fill="none"/>
  <path d="M278.500,285 L278,357 M286,285 L286.500,357" stroke="#e3e3ec" stroke-width="0.800" fill="none"/>
  <ellipse cx="282" cy="281.500" rx="1.700" ry="1.400" fill="#e9e3e0"/>
  <ellipse cx="282" cy="317" rx="1.700" ry="1.700" fill="#e6e2e4"/>
  <!-- soft shirt shading -->
  <path d="M197,292 C207,318 206,340 203,370 L180,370 L180,292 Z" fill="#e3e0f1" opacity="0.9" filter="url(#b3)"/>
  <path d="M371,290 C362,316 363,340 365,370 L390,370 L390,290 Z" fill="#e3e0f1" opacity="0.9" filter="url(#b3)"/>
  <path d="M225,300 C235,320 240,340 238,357" stroke="#eae8f4" stroke-width="5" fill="none" opacity="0.8" filter="url(#b3)"/>
  <path d="M340,300 C332,320 328,340 330,357" stroke="#ededf5" stroke-width="5" fill="none" opacity="0.8" filter="url(#b3)"/>
 </g>
 </g>
</svg>
<!--/PHOTO-->
<!--DOCK-->
<div class="a" style="left:544.5px;top:37.5px;width:22.5px;height:370.5px;background:#4d4d4d;"></div>
<div class="a" style="left:544.5px;top:37.5px;width:22.5px;height:10.5px;background:#2d2d2d;"></div>
<svg class="a" style="left:559.500px;top:39px;" width="6" height="4" viewBox="0 0 6 4"><path d="M2.300,0.300 L0.300,2 L2.300,3.700 Z M5.300,0.300 L3.300,2 L5.300,3.700 Z" fill="#d0d0d0"/></svg>
<!--/DOCK-->
<!--PANELS-->
<style>
#pnl{left:567px;top:37.5px;width:138px;height:370.5px;background:#535353;}
#pnl .t{font-size:7px;}
.ph{position:absolute;left:0;width:138px;background:#343434;}
.vb{position:absolute;box-sizing:border-box;background:#474747;border:0.5px solid #3c3c3c;color:#777;font-size:7px;white-space:nowrap;}
.mi{position:absolute;}
</style>
<div class="a" id="pnl">
 <!-- coords = page minus (567,37.5) -->
 <div class="ph" style="top:0;height:6.5px;background:#2d2d2d;"></div>
 <svg class="a" style="left:128px;top:1.500px;" width="6" height="4" viewBox="0 0 6 4"><path d="M0.300,0.300 L2.300,2 L0.300,3.700 Z M3.300,0.300 L5.300,2 L3.300,3.700 Z" fill="#d0d0d0"/></svg>
 <div class="ph" style="top:6.500px;height:9.500px;background:#3a3a3a;"></div>
 <svg class="mi" style="left:126px;top:9px;" width="8" height="6" viewBox="0 0 8 6"><path d="M0,1.500 L2.600,1.500 L1.300,3.300 Z" fill="#d6d6d6"/><path d="M3.300,1 H7.500 M3.300,2.800 H7.500 M3.300,4.600 H7.500" stroke="#d6d6d6" stroke-width="0.900"/></svg>
 <!-- colour sliders -->
 <div class="a" style="left:34.700px;top:23.500px;width:62px;height:3.200px;border-radius:1px;background:linear-gradient(to right,#0256b0,#ff56b0);box-shadow:0 0 0 0.5px #3a3a3a;"></div>
 <div class="a" style="left:34.700px;top:37.800px;width:62px;height:3.200px;border-radius:1px;background:linear-gradient(to right,#0200b0,#02ffb0);box-shadow:0 0 0 0.5px #3a3a3a;"></div>
 <div class="a" style="left:34.700px;top:52px;width:62px;height:3.200px;border-radius:1px;background:linear-gradient(to right,#025600,#0256ff);box-shadow:0 0 0 0.5px #3a3a3a;"></div>
 <svg class="a" style="left:74.500px;top:56px;" width="6" height="5" viewBox="0 0 6 5"><path d="M3,0.300 L5.700,4.700 L0.300,4.700 Z" fill="#e4e4e4" stroke="#3a3a3a" stroke-width="0.400"/></svg>
 <div class="vb" style="left:99.800px;top:22.800px;width:21px;height:10.400px;"><span style="position:absolute;left:2.500px;top:1.700px;">2</span></div>
 <div class="vb" style="left:99.800px;top:36.700px;width:21px;height:10.400px;"><span style="position:absolute;left:2.500px;top:1.700px;">86</span></div>
 <div class="vb" style="left:99.800px;top:50.800px;width:21px;height:10.200px;"><span style="position:absolute;left:2.500px;top:1.700px;">176</span></div>
 <!-- spectrum -->
 <div class="a" style="left:20px;top:67.500px;width:100.500px;height:8.300px;background:linear-gradient(to right,#ff0000 0,#ffff00 12%,#00ff00 26%,#00ffff 38%,#0000ff 56%,#ff00ff 76%,#ff0000 100%);"></div>
 <div class="a" style="left:20px;top:67.500px;width:100.500px;height:8.300px;background:linear-gradient(to bottom,rgba(255,255,255,0.95) 0,rgba(255,255,255,0) 45%,rgba(0,0,0,0) 55%,rgba(0,0,0,0.97) 100%);"></div>
 <div class="a" style="left:120.500px;top:67.500px;width:4.700px;height:4.200px;background:#fff;"></div>
 <div class="a" style="left:120.500px;top:71.700px;width:4.700px;height:4.100px;background:#000;"></div>
 <!-- adjustments header -->
 <div class="ph" style="top:80.500px;height:10px;background:#323232;"></div>
 <svg class="mi" style="left:126px;top:83.500px;" width="8" height="6" viewBox="0 0 8 6"><path d="M0,1.500 L2.600,1.500 L1.300,3.300 Z" fill="#d6d6d6"/><path d="M3.300,1 H7.500 M3.300,2.800 H7.500 M3.300,4.600 H7.500" stroke="#d6d6d6" stroke-width="0.900"/></svg>
 <!-- adjustment icons -->
 <svg class="a" style="left:50px;top:104px;" width="60" height="46" viewBox="617 141.500 60 46">
  <g fill="#d4d4d4">
   <rect x="622" y="145.800" width="9" height="7.700"/>
   <rect x="635" y="145.800" width="9.700" height="7.700"/>
   <path d="M648.700,145.800 H658 L653.400,153.800 Z"/>
   <rect x="628.400" y="160.800" width="6.500" height="5.500"/><rect x="631.500" y="163.300" width="6.500" height="5.700"/>
   <circle cx="646.200" cy="163" r="2.700"/><circle cx="643.900" cy="166.500" r="2.700"/><circle cx="648.500" cy="166.500" r="2.700"/>
   <rect x="655.300" y="160.800" width="9.700" height="8.200"/>
   <rect x="622" y="176" width="9" height="7.800"/>
   <rect x="635" y="176" width="9.700" height="7.800"/>
   <rect x="648.700" y="176" width="9.300" height="7.800"/>
  </g>
  <g fill="none" stroke="#4a4a4a" stroke-width="0.800">
   <path d="M624,152.500 L630,146.800 M624,149.500 h6"/>
   <path d="M636,152.500 L643.700,147 M636.500,148.300 h2.500 M641,151.800 h2.500"/>
   <path d="M651.200,147.500 H655.500 L653.400,151.300 Z" fill="#4a4a4a"/>
   <circle cx="634.800" cy="166.200" r="1.600"/>
   <path d="M655.300,163.300 H665 M655.300,166.200 H665 M658.500,160.800 V169 M661.800,160.800 V169"/>
   <path d="M623,183 C626,182 628,178 630.500,177" stroke-width="1.600"/>
   <path d="M636,177 L643.700,182.800 M636,182.800 L643.700,177" />
  </g>
  <rect x="649.700" y="177" width="7.300" height="5.800" fill="#6a6a6a"/>
  <rect x="653" y="177" width="4" height="5.800" fill="#b0b0b0"/>
 </svg>
 <!-- layers header -->
 <div class="ph" style="top:154px;height:9.500px;background:#303030;"></div>
 <svg class="mi" style="left:126px;top:157px;" width="8" height="6" viewBox="0 0 8 6"><path d="M0,1.500 L2.600,1.500 L1.300,3.300 Z" fill="#d6d6d6"/><path d="M3.300,1 H7.500 M3.300,2.800 H7.500 M3.300,4.600 H7.500" stroke="#d6d6d6" stroke-width="0.900"/></svg>
 <!-- filter row icons -->
 <svg class="a" style="left:53px;top:166px;" width="85" height="14" viewBox="620 203.500 85 14">
  <g fill="none" stroke="#cfcfcf" stroke-width="0.900">
   <rect x="622.500" y="207" width="5.500" height="6.500"/>
   <circle cx="638" cy="210.300" r="3" fill="#cfcfcf" stroke="none"/>
   <path d="M638,207.300 A3,3 0 0 0 638,213.300 Z" fill="#555" stroke="none"/>
   <path d="M648.500,207.500 H654.700 M651.600,207.500 V213.700" stroke-width="1.200"/>
   <rect x="662.300" y="207.800" width="5.400" height="5.400"/>
   <path d="M661,209 h8 M661,212 h8 M663.500,206.500 v8 M666.500,206.500 v8" stroke-width="0.500"/>
   <rect x="675.300" y="209.500" width="5" height="4" fill="#cfcfcf"/>
   <path d="M676.300,209.500 v-1.300 a1.500,1.500 0 0 1 3,0 v1.300"/>
  </g>
  <rect x="695" y="205.800" width="3.500" height="8.500" fill="#3a3a3a"/>
  <rect x="695.600" y="206.400" width="2.300" height="2.500" fill="#6a6a6a"/>
 </svg>
 <div class="a" style="left:0;top:179.500px;width:138px;height:0.700px;background:#404040;"></div>
 <!-- opacity row -->
 <svg class="a" style="left:58.500px;top:184px;" width="5" height="8" viewBox="0 0 5 8"><path d="M2.500,0.800 L4.500,3.200 H0.500 Z M2.500,7.200 L4.500,4.800 H0.500 Z" fill="#d8d8d8"/></svg>
 <div class="t" style="left:69px;top:184.500px;color:#d2d2d2;">不透明度:</div>
 <div class="vb" style="left:101px;top:183.200px;width:19.500px;height:9.600px;color:#6c6c6c;"><span style="position:absolute;left:1.500px;top:1.400px;font-size:6.500px;">100%</span></div>
 <div class="a" style="left:122px;top:183.200px;width:9.500px;height:9.600px;background:#6b6b6b;border-radius:1px;"></div>
 <svg class="a" style="left:124.500px;top:186.500px;" width="5" height="4" viewBox="0 0 5 4"><path d="M0.500,0.700 H4.500 L2.500,3.200 Z" fill="#f0f0f0"/></svg>
 <div class="a" style="left:0;top:195.500px;width:138px;height:0.700px;background:#464646;"></div>
 <!-- fill row -->
 <svg class="a" style="left:62.500px;top:199.500px;" width="7" height="8" viewBox="0 0 7 8"><rect x="0.800" y="3.500" width="5.400" height="4" fill="#d8d8d8"/><path d="M2,3.500 v-1.200 a1.500,1.500 0 0 1 3,0 v1.200" fill="none" stroke="#d8d8d8" stroke-width="0.900"/></svg>
 <div class="t" style="left:82px;top:200.500px;color:#d2d2d2;">填充:</div>
 <div class="vb" style="left:101px;top:199.300px;width:19.500px;height:9.600px;color:#6c6c6c;"><span style="position:absolute;left:1.500px;top:1.400px;font-size:6.500px;">100%</span></div>
 <div class="a" style="left:122px;top:199.300px;width:9.500px;height:9.600px;background:#6b6b6b;border-radius:1px;"></div>
 <svg class="a" style="left:124.500px;top:202.500px;" width="5" height="4" viewBox="0 0 5 4"><path d="M0.500,0.700 H4.500 L2.500,3.200 Z" fill="#f0f0f0"/></svg>
 <!-- layer rows -->
 <div class="a" style="left:0;top:212.500px;width:127px;height:22px;background:#647ea2;"><div class="t" style="left:59.500px;top:8px;color:#fff;">拷贝</div></div>
 <div class="a" style="left:0;top:234.500px;width:127px;height:22.500px;background:#505050;"></div>
 <div class="a" style="left:0;top:257px;width:127px;height:101.500px;background:#464646;"></div>
 <div class="a" style="left:127px;top:212.500px;width:11px;height:146px;background:#4e4e4e;"></div>
 <!-- bottom bar -->
 <div class="a" style="left:0;top:358.500px;width:138px;height:12px;background:#4d4d4d;"></div>
 <svg class="a" style="left:20px;top:359.500px;" width="105" height="9" viewBox="587 397 105 9">
  <g fill="none" stroke="#adadad" stroke-width="0.900">
   <ellipse cx="590.500" cy="401.300" rx="2" ry="1.500"/><ellipse cx="593.500" cy="401.300" rx="2" ry="1.500"/>
   <rect x="619.500" y="399" width="6" height="4.800" fill="#bdbdbd"/>
   <circle cx="637.300" cy="401.300" r="2.600"/>
   <path d="M650,399.300 h2 l0.700,0.800 h3 v3.800 h-5.700 Z" fill="#bdbdbd"/>
   <path d="M665,399 h5.300 v3 l-2,2 h-3.300 Z" fill="#bdbdbd"/>
   <path d="M680.500,400 h5 M681.200,400.200 l0.400,4 h2.900 l0.400,-4 M682.300,399.300 h1.500"/>
  </g>
  <circle cx="622.500" cy="401.400" r="1.400" fill="#4d4d4d"/>
  <path d="M637.300,398.700 A2.600,2.600 0 0 1 637.300,403.900 Z" fill="#bdbdbd"/>
  <text x="604" y="404" font-family="Liberation Serif, serif" font-style="italic" font-size="7.500" fill="#bdbdbd">fx</text>
 </svg>
</div>
<div class="a" style="left:544px;top:396.500px;width:0.800px;height:11.500px;background:#303030;"></div>
<div class="a" style="left:565.500px;top:396.500px;width:1.500px;height:11.500px;background:#303030;"></div>
<!--/PANELS-->
<!--DIALOG-->
<style>
#dlg{left:414.5px;top:46.5px;width:209.5px;height:349.5px;border-radius:3px;box-sizing:border-box;
 background:linear-gradient(to right,#54585e 0,#42474d 4px,#444a51 60%,#4a4f56 100%);
 box-shadow:0 0 0 0.5px rgba(150,158,168,0.7), 0 1px 4px rgba(0,0,0,0.5);}
#dlgtitle{left:0;top:0;width:209.5px;height:15.5px;border-radius:3px 3px 0 0;
 background:linear-gradient(to right,#6e7278 0,#85898e 10px,#868a8f 28px,#6a6e75 45px,#555a61 70px,#4b5057 100px,#535860 125px,#484d54 150px,#5a6068 175px,#747b85 195px,#8a94a2 100%);box-shadow:inset 0 0.7px 0 rgba(190,196,204,0.55);}
#dlgbody{left:4px;top:15.5px;width:201.5px;height:330px;background:#f0f0f0;box-shadow:0 0 0 0.5px #8a8f97;}
#dlg .t{color:#161616;font-size:7px;}
.gb{position:absolute;border:0.6px solid #cfcfcf;border-radius:1.5px;box-sizing:border-box;}
.gbl{position:absolute;background:#f0f0f0;padding:0 2px;white-space:nowrap;color:#161616;}
.btn{position:absolute;box-sizing:border-box;border:0.6px solid #989898;border-radius:1.5px;
 background:linear-gradient(#f4f4f4 0,#ececec 48%,#dedede 52%,#d4d4d4 100%);text-align:center;color:#161616;font-size:7px;line-height:9px;white-space:nowrap;}
.inp{position:absolute;box-sizing:border-box;border:0.6px solid #d4d7dd;border-top-color:#b9bcc3;background:#fff;color:#161616;font-size:7px;white-space:nowrap;}
.trk{position:absolute;height:2.600px;background:linear-gradient(#a2a2a2,#c8c8c8);border-radius:1px;}
.thumb{position:absolute;width:0;height:0;}
.cb{position:absolute;box-sizing:border-box;border:0.6px solid #a2a3a5;background:linear-gradient(135deg,#dcdcdc,#fdfdfd);}
.rd{position:absolute;box-sizing:border-box;border:0.6px solid #9a9b9d;border-radius:50%;background:radial-gradient(#fdfdfd,#dcdcdc);}
</style>
<div class="a" id="dlg">
 <div class="a" id="dlgtitle">
  <div class="t" style="left:4.5px;top:4px;color:#111;font-size:7px;text-shadow:0 0 3px rgba(255,255,255,0.8),0 0 5px rgba(255,255,255,0.6);">替换颜色</div>
  <svg class="a" style="left:190px;top:2.5px;" width="8" height="7" viewBox="0 0 8 7"><path d="M1.2,0.8 L6.3,5.8 M6.3,0.8 L1.2,5.8" stroke="#fff" stroke-width="1.500" fill="none"/></svg>
 </div>
<div class="a" style="left:205.700px;top:15.500px;width:3.800px;height:333.500px;border-radius:0 0 3px 0;background:linear-gradient(to bottom,#98a3b2 0,#a6b2c2 8px,#a3afbf 58px,#7f8a97 83px,#76818d 188px,#8395af 203px,#8395af 222px,#6a727c 230px,#565c64 258px,#444950 298px,#42474d 100%);"></div>
 <div class="a" id="dlgbody">
  <!-- groupbox 选区 : page coords minus (418.5,62) -->
  <div class="gb" style="left:5.500px;top:11.500px;width:131px;height:217.500px;"></div>
  <div class="gbl" style="left:16.500px;top:7.500px;">选区</div>
  <div class="cb" style="left:12px;top:19px;width:7px;height:7px;"></div>
  <div class="t" style="left:20.500px;top:19px;">本地化颜色簇(Z)</div>
  <!-- eyedroppers -->
  <div class="a" style="left:25.500px;top:38px;width:14.500px;height:14px;box-sizing:border-box;border:0.6px solid #5a5a5a;border-radius:1.5px;background:#e3e3e3;"></div>
  <svg class="a" style="left:12px;top:38px;" width="60" height="15" viewBox="0 0 60 15">
   <g fill="none" stroke="#333" stroke-width="0.900" stroke-linecap="round">
    <path d="M2.300,12.200 L3,9.800 L7.200,5.600 L8.700,7.100 L4.500,11.300 Z" fill="#f4f4f4"/>
    <path d="M6.600,4.600 L9.700,7.700" stroke-width="1.300"/>
    <path d="M8.400,5.900 L10.200,4.100" stroke-width="2.200" stroke="#2a2a2a"/>
   </g>
   <g fill="none" stroke="#333" stroke-width="0.900" stroke-linecap="round" transform="translate(15.500,0)">
    <path d="M2.300,12.200 L3,9.800 L7.200,5.600 L8.700,7.100 L4.500,11.300 Z" fill="#f4f4f4"/>
    <path d="M6.600,4.600 L9.700,7.700" stroke-width="1.300"/>
    <path d="M8.400,5.900 L10.200,4.100" stroke-width="2.200" stroke="#2a2a2a"/>
   </g>
   <g fill="none" stroke="#333" stroke-width="0.900" stroke-linecap="round" transform="translate(30.500,0)">
    <path d="M2.300,12.200 L3,9.800 L7.200,5.600 L8.700,7.100 L4.500,11.300 Z" fill="#f4f4f4"/>
    <path d="M6.600,4.600 L9.700,7.700" stroke-width="1.300"/>
    <path d="M8.400,5.900 L10.200,4.100" stroke-width="2.200" stroke="#2a2a2a"/>
   </g>
   <path d="M17.300,4.500 h2.600 M18.600,3.200 v2.600" stroke="#222" stroke-width="0.700"/>
   <path d="M32.500,4.500 h2.400" stroke="#222" stroke-width="0.700"/>
  </svg>
  <div class="t" style="left:86.500px;top:41px;">颜色:</div>
  <div class="a" style="left:108.300px;top:35.500px;width:20.500px;height:20.300px;background:#1452ac;box-shadow:0 0 0 0.5px #7a7a7a;"></div>
  <div class="t" style="left:14px;top:67px;">颜色容差(F):</div>
  <div class="inp" style="left:102px;top:65px;width:25.500px;height:10.500px;"><span style="position:absolute;left:3px;top:1.500px;">100</span></div>
  <div class="trk" style="left:15px;top:79px;width:112px;"></div>
  <svg class="a" style="left:67px;top:76.500px;" width="7" height="7" viewBox="0 0 7 7"><path d="M3.500,0.500 L6,3 L6,6 L1,6 L1,3 Z" fill="#f4f4f4" stroke="#777" stroke-width="0.700"/></svg>
  <!-- mask preview -->
  <svg class="a" style="left:30.500px;top:93px;" width="73.500" height="103.500" viewBox="192 98 184 259" preserveAspectRatio="none">
   <rect x="192" y="98" width="184" height="259" fill="#fff"/>
   <path fill="#000" d="M190,360 L190,285 C200,281 214,276 221.5,273.0 C221.9,270.5 222.9,263.5 223.7,258.0 C224.5,252.5 225.7,246.0 226.5,240.0 C227.3,234.0 228.2,227.5 228.8,222.0 C229.4,216.5 229.9,211.8 230.3,207.0 C230.7,202.2 231.0,197.4 231.3,193.0 C231.6,188.6 231.9,185.6 232.3,180.7 C232.8,175.8 232.8,169.2 234.0,163.5 C235.2,157.8 237.5,150.6 239.2,146.3 C240.9,142.0 241.9,140.7 244.3,137.8 C246.7,135.0 250.4,131.8 253.8,129.2 C257.2,126.6 260.9,124.0 265.0,122.3 C269.1,120.6 274.2,119.3 278.7,119.2 C283.2,119.1 287.7,119.8 292.0,121.5 C296.3,123.2 300.5,126.5 304.4,129.2 C308.3,131.9 312.7,135.0 315.6,137.8 C318.5,140.7 319.6,142.0 321.6,146.3 C323.6,150.6 326.2,157.8 327.6,163.5 C329.0,169.2 329.5,175.3 330.2,180.7 C330.9,186.1 331.1,191.1 331.6,196.0 C332.1,200.9 332.5,205.8 333.0,210.0 C333.5,214.2 333.8,217.2 334.5,221.5 C335.2,225.8 336.1,231.9 337.0,236.0 C337.9,240.1 338.8,242.3 339.7,246.0 C340.6,249.7 341.4,253.9 342.5,258.0 C343.6,262.1 345.8,268.4 346.5,270.5 C357,273 368,277.500 378,281.500 L378,360 Z"/>
  </svg>
  <div class="rd" style="left:28.500px;top:211px;width:6.500px;height:6.500px;"><div class="a" style="left:1.400px;top:1.400px;width:2.600px;height:2.600px;border-radius:50%;background:#1f4f8f;"></div></div>
  <div class="t" style="left:38px;top:210.800px;">选区(C)</div>
  <div class="rd" style="left:72px;top:211px;width:6.500px;height:6.500px;"></div>
  <div class="t" style="left:81px;top:210.800px;">图像(M)</div>
  <!-- groupbox 替换 -->
  <div class="gb" style="left:5.500px;top:241.500px;width:190.500px;height:83px;"></div>
  <div class="gbl" style="left:16.500px;top:237.500px;">替换</div>
  <div class="t" style="left:14px;top:255.500px;">色相(H):</div>
  <div class="inp" style="left:132.500px;top:253.500px;width:24px;height:10px;"><span style="position:absolute;left:2px;top:1.300px;">0</span></div>
  <div class="trk" style="left:15px;top:267.600px;width:141px;"></div>
  <svg class="a" style="left:82px;top:264.500px;" width="7" height="7" viewBox="0 0 7 7"><path d="M3.500,0.500 L6,3 L6,6 L1,6 L1,3 Z" fill="#f4f4f4" stroke="#777" stroke-width="0.700"/></svg>
  <div class="t" style="left:14px;top:279.500px;">饱和度(A):</div>
  <div class="inp" style="left:132.500px;top:277.500px;width:24px;height:10px;"><span style="position:absolute;left:2px;top:1.300px;">0</span></div>
  <div class="trk" style="left:15px;top:292px;width:141px;"></div>
  <svg class="a" style="left:82px;top:289px;" width="7" height="7" viewBox="0 0 7 7"><path d="M3.500,0.500 L6,3 L6,6 L1,6 L1,3 Z" fill="#f4f4f4" stroke="#777" stroke-width="0.700"/></svg>
  <div class="t" style="left:14px;top:302.500px;">明度(G):</div>
  <div class="inp" style="left:132.500px;top:300.500px;width:24px;height:10px;"><span style="position:absolute;left:2px;top:1.300px;">0</span></div>
  <div class="trk" style="left:15px;top:315px;width:141px;"></div>
  <svg class="a" style="left:82px;top:312px;" width="7" height="7" viewBox="0 0 7 7"><path d="M3.500,0.500 L6,3 L6,6 L1,6 L1,3 Z" fill="#f4f4f4" stroke="#777" stroke-width="0.700"/></svg>
  <div class="a" style="left:168.500px;top:254.500px;width:21px;height:20.500px;background:#1452ac;box-shadow:0 0 0 0.5px #7a7a7a;"></div>
  <div class="t" style="left:171.500px;top:281.500px;">结果</div>
  <!-- buttons -->
  <div class="btn" style="left:144.500px;top:10px;width:51.500px;height:10.500px;border-color:#3c7fb1;background:linear-gradient(#eaf6fd 0,#d9f0fc 48%,#bee6fd 52%,#a7d9f5 100%);box-shadow:inset 0 0 0 0.7px #47c1f0;">确定</div>
  <div class="btn" style="left:144.500px;top:27px;width:51.500px;height:10px;">取消</div>
  <div class="btn" style="left:144.500px;top:46px;width:51.500px;height:10px;">载入(L)...</div>
  <div class="btn" style="left:144.500px;top:61.500px;width:51.500px;height:10.500px;">存储(S)...</div>
  <div class="cb" style="left:151.500px;top:80.500px;width:7px;height:7px;"></div>
  <svg class="a" style="left:151.500px;top:80px;" width="8" height="8" viewBox="0 0 8 8"><path d="M1.800,3.800 L3.300,5.600 L6.200,1.600" stroke="#1c3f8c" stroke-width="1.100" fill="none"/></svg>
  <div class="t" style="left:160.500px;top:80.500px;">预览(P)</div>
 </div>
</div>
<!--/DIALOG-->
<div class="a" id="frameL" style="left:0;top:0;width:1.5px;height:408px;background:#22222a;"></div>
<div class="a" style="left:0;top:0;width:705px;height:0.8px;background:#2a2a2e;"></div>
<div class="a" id="frameR" style="left:703.300px;top:0;width:1.700px;height:408px;background:#2a2a2c;"></div>
<!--WATERMARK-->
<svg class="a" style="left:560px;top:363px;" width="34" height="30" viewBox="560 362 34 30">
 <g fill="#fff" stroke="rgba(90,90,90,0.55)" stroke-width="0.500">
  <path d="M573,365.300 c-5.300,0 -9.500,3.500 -9.500,7.900 c0,2.500 1.400,4.700 3.600,6.100 l-1,3 l3.500,-1.800 c1,0.300 2.200,0.500 3.400,0.500 c0.400,0 0.700,0 1.100,-0.100 c-0.300,-0.800 -0.400,-1.500 -0.400,-2.300 c0,-4.200 4,-7.500 8.800,-7.500 c0.300,0 0.500,0 0.800,0 C582.300,367.700 578,365.300 573,365.300 Z"/>
  <path d="M590.800,378.800 c0,-3.600 -3.600,-6.600 -7.900,-6.600 c-4.400,0 -8,3 -8,6.600 c0,3.700 3.600,6.600 8,6.600 c0.900,0 1.800,-0.100 2.700,-0.400 l2.800,1.600 l-0.800,-2.500 C589.500,382.900 590.800,381 590.800,378.800 Z"/>
 </g>
 <g fill="#9a9a9a">
  <circle cx="569.800" cy="370.800" r="1.100"/><circle cx="576" cy="370.800" r="1.100"/>
  <circle cx="580.300" cy="377.300" r="0.900"/><circle cx="585.500" cy="377.300" r="0.900"/>
 </g>
</svg>
<div class="t" style="left:595.500px;top:368.500px;font-size:17.200px;font-weight:400;color:#fff;letter-spacing:0;text-shadow:0.600px 0.600px 1px rgba(0,0,0,0.55);">小钱学设计</div>
<!--/WATERMARK-->

</div>
</body>
</html>
